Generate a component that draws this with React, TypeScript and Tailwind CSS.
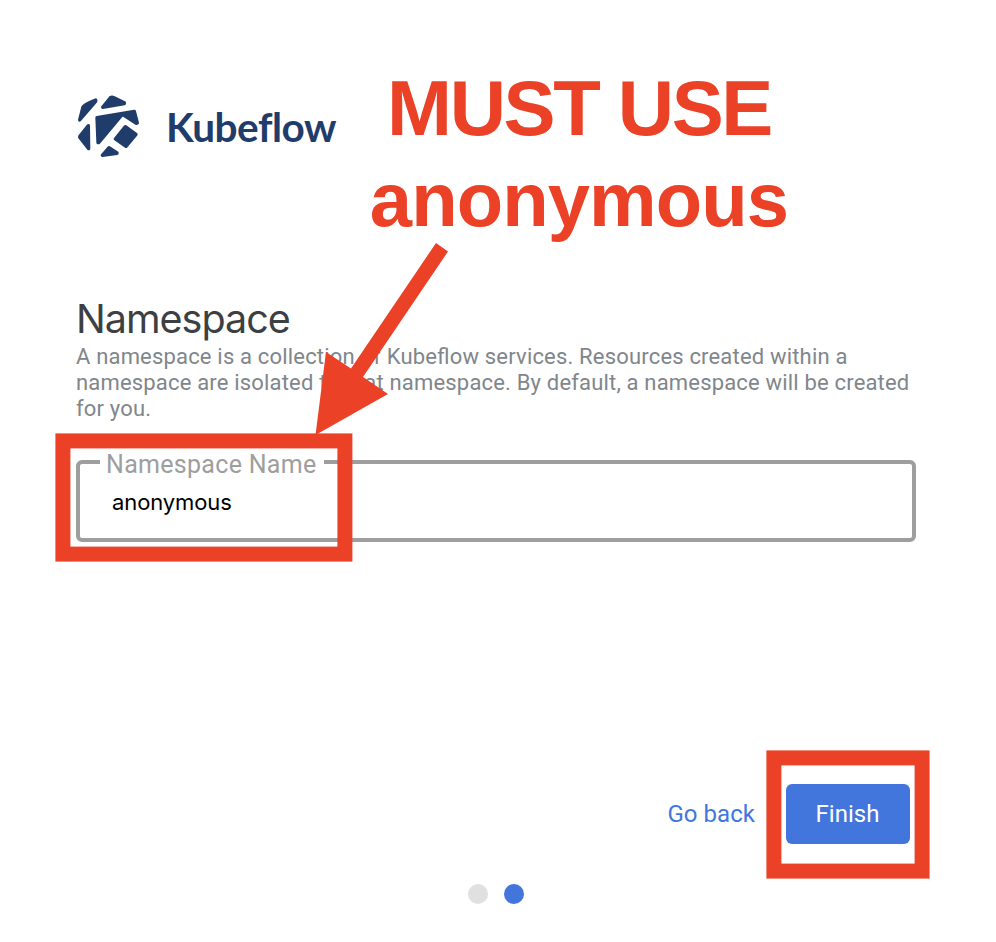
import React from "react";

function KubeflowMark() {
  return (
    <svg
      className="h-[64px] w-[64px] shrink-0"
      viewBox="51 42 192 192"
      fill="#1f3c6b"
      stroke="#1f3c6b"
      strokeWidth="10"
      strokeLinejoin="round"
    >
      <path d="M59 120 L69 81 Q74 73 107 60 Q108 62 107 64 Z" />
      <path d="M128 82 L151 53 Q155 50 159 52 L193 68 L193 71 Z" />
      <path d="M111 113 L223 94 L232 129 L229 130 L192 106 Q187 103 183 108 L116 188 L114 188 Z" />
      <path d="M85 137 L86 206 L59 172 L60 168 Z" />
      <path d="M196 140 L228 163 L198 199 L166 177 Z" />
      <path d="M127 226 L147 203 L171 219 L171 220 Z" />
    </svg>
  );
}

function Brand() {
  return (
    <header className="ml-px flex h-[64px] items-center">
      <KubeflowMark />
      <span className="ml-[25px] pt-px font-['Lato',sans-serif] text-[40.500px] leading-[64px] font-bold tracking-[-0.500px] text-[#1f3c6b]">
        Kubeflow
      </span>
    </header>
  );
}

function NamespaceField() {
  return (
    <fieldset className="mt-[27px] flex h-[93px] w-[840px] flex-col rounded-[6px] border-4 border-[#9e9e9e] pt-[14px] pl-[32px]">
      <legend className="-ml-[12px] h-[26px] pr-[7px] pl-[6px] text-[25px] leading-[32px] tracking-[0.3px] text-[#9e9e9e]">
        Namespace Name
      </legend>
      <span className="font-['Inter',sans-serif] text-[22px] leading-[26px] tracking-[-0.1px] text-black">
        anonymous
      </span>
    </fieldset>
  );
}

function Annotations() {
  return (
    <div className="pointer-events-none absolute inset-0 text-[#eb4127]">
      <div className="absolute top-[63px] left-[279px] w-[600px] text-center font-['Liberation_Sans',Arial,sans-serif] leading-[90px] font-bold">
        <div className="text-[78px] tracking-[-2.4px]">MUST USE</div>
        <div className="mt-[2px] text-[76px] tracking-[-0.9px]">anonymous</div>
      </div>
      <svg className="absolute inset-0 h-[942px] w-[996px]" viewBox="0 0 996 942">
        <path
          fill="currentColor"
          d="M436 243 L448 251.500 L363 377 L388 394 L315.500 435 L326 352 L351 368.500 Z"
        />
        <g fill="none" stroke="currentColor" strokeWidth="15">
          <rect x="62.900" y="440.900" width="282" height="113.200" />
          <rect x="773.900" y="757.900" width="148.200" height="113.200" />
        </g>
      </svg>
    </div>
  );
}

export default function App() {
  return (
    <main className="relative flex h-[942px] w-[996px] flex-col overflow-hidden bg-white px-[76px] pt-[94px] font-['Roboto',sans-serif]">
      <Brand />
      <section className="mt-[136px]">
        <h1 className="h-[50px] font-['Inter',sans-serif] text-[39.500px] leading-[50px] tracking-[-1px] text-[#3c4043]">
          Namespace
        </h1>
        <p className="text-[22px] leading-[26px] tracking-[0.180px] whitespace-nowrap text-[#80868b] [font-feature-settings:'liga']">
          A namespace is a collection of Kubeflow services. Resources created within a
          <br />
          namespace are isolated to that namespace. By default, a namespace will be created
          <br />
          for you.
        </p>
        <NamespaceField />
      </section>
      <div className="mt-[242px] flex h-[60px] items-center justify-end pr-[10px] text-[24px] tracking-[0.050px]">
        <button className="mr-[31px] text-[#4376dc]">Go back</button>
        <button className="h-[60px] w-[124px] rounded-[6px] bg-[#4376dc] pr-px text-white">Finish</button>
      </div>
      <div className="mt-[40px] flex justify-center gap-[16px] pr-[4px]">
        <span className="h-5 w-5 rounded-full bg-[#e0e0e0]" />
        <span className="h-5 w-5 rounded-full bg-[#4376dc]" />
      </div>
      <Annotations />
    </main>
  );
}
